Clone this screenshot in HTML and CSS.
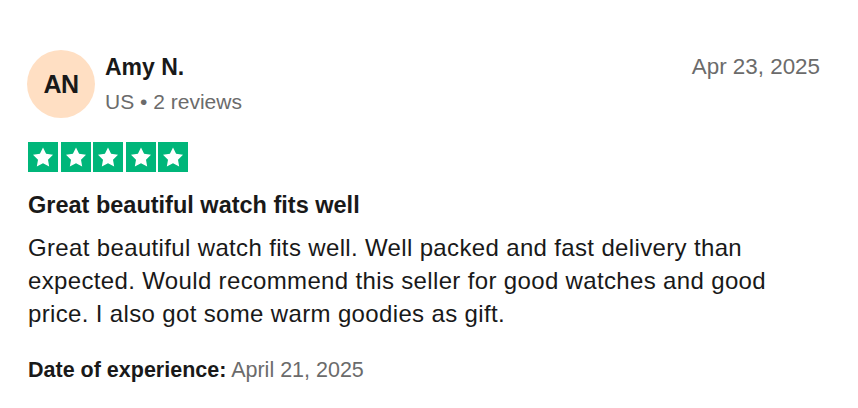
FILE: index.html
```html
<!DOCTYPE html>
<html lang="en">
<head>
<meta charset="utf-8">
<title>Review</title>
<link rel="stylesheet" href="styles.css">
</head>
<body>
<article class="review">
  <header class="review-header">
    <div class="avatar">AN</div>
    <div class="consumer">
      <div class="name">Amy N.</div>
      <div class="meta">US • 2 reviews</div>
    </div>
    <time class="date">Apr 23, 2025</time>
  </header>
  <div class="stars" aria-label="Rated 5 out of 5">
    <span class="star"><svg viewBox="0 0 30 30" width="30" height="30"><polygon transform="translate(3 3.6)" fill="#fff" points="12,2 15.09,8.26 22,9.27 17,14.14 18.18,21.02 12,17.77 5.82,21.02 7,14.14 2,9.27 8.91,8.26"/></svg></span>
    <span class="star"><svg viewBox="0 0 30 30" width="30" height="30"><polygon transform="translate(3 3.6)" fill="#fff" points="12,2 15.09,8.26 22,9.27 17,14.14 18.18,21.02 12,17.77 5.82,21.02 7,14.14 2,9.27 8.91,8.26"/></svg></span>
    <span class="star"><svg viewBox="0 0 30 30" width="30" height="30"><polygon transform="translate(3 3.6)" fill="#fff" points="12,2 15.09,8.26 22,9.27 17,14.14 18.18,21.02 12,17.77 5.82,21.02 7,14.14 2,9.27 8.91,8.26"/></svg></span>
    <span class="star"><svg viewBox="0 0 30 30" width="30" height="30"><polygon transform="translate(3 3.6)" fill="#fff" points="12,2 15.09,8.26 22,9.27 17,14.14 18.18,21.02 12,17.77 5.82,21.02 7,14.14 2,9.27 8.91,8.26"/></svg></span>
    <span class="star"><svg viewBox="0 0 30 30" width="30" height="30"><polygon transform="translate(3 3.6)" fill="#fff" points="12,2 15.09,8.26 22,9.27 17,14.14 18.18,21.02 12,17.77 5.82,21.02 7,14.14 2,9.27 8.91,8.26"/></svg></span>
  </div>
  <h2 class="title">Great beautiful watch fits well</h2>
  <p class="text">Great beautiful watch fits well. Well packed and fast delivery than expected. Would recommend this seller for good watches and good price. I also got some warm goodies as gift.</p>
  <p class="experience"><b>Date of experience:</b> April 21, 2025</p>
</article>
</body>
</html>
```

FILE: styles.css
```css
html, body {
  margin: 0;
  padding: 0;
  background: #ffffff;
}

body {
  font-family: "Liberation Sans", Arial, Helvetica, sans-serif;
  color: #191919;
}

.review {
  padding: 50px 38px 0 27px;
}

.review-header {
  display: flex;
  align-items: flex-start;
}

.avatar {
  width: 68px;
  height: 68px;
  flex: none;
  border-radius: 50%;
  background: #ffdfc3;
  color: #191919;
  font-weight: 700;
  font-size: 25px;
  letter-spacing: -0.6px;
  display: flex;
  align-items: center;
  justify-content: center;
}

.consumer {
  margin-left: 10px;
  margin-top: 3px;
  flex: 1;
}

.name {
  font-size: 23px;
  font-weight: 700;
  line-height: 28px;
}

.meta {
  margin-top: 8px;
  font-size: 21px;
  line-height: 26px;
  color: #6b6b6b;
}

.date {
  margin-top: 3px;
  font-size: 22.4px;
  line-height: 28px;
  color: #6b6b6b;
}

.stars {
  display: flex;
  gap: 2.5px;
  margin-top: 24px;
  padding-left: 1px;
}

.star {
  width: 30px;
  height: 30px;
  background: #00b67a;
  display: block;
}

.star svg {
  display: block;
}

.title {
  margin: 18px 0 0 1px;
  font-size: 23.5px;
  line-height: 30px;
  font-weight: 700;
}

.text {
  margin: 11px 0 0 1px;
  font-size: 24px;
  line-height: 33px;
  letter-spacing: 0.35px;
}

.experience {
  margin: 26px 0 0 1px;
  font-size: 21.5px;
  line-height: 28px;
  color: #6b6b6b;
}

.experience b {
  color: #191919;
  font-weight: 700;
}
```
